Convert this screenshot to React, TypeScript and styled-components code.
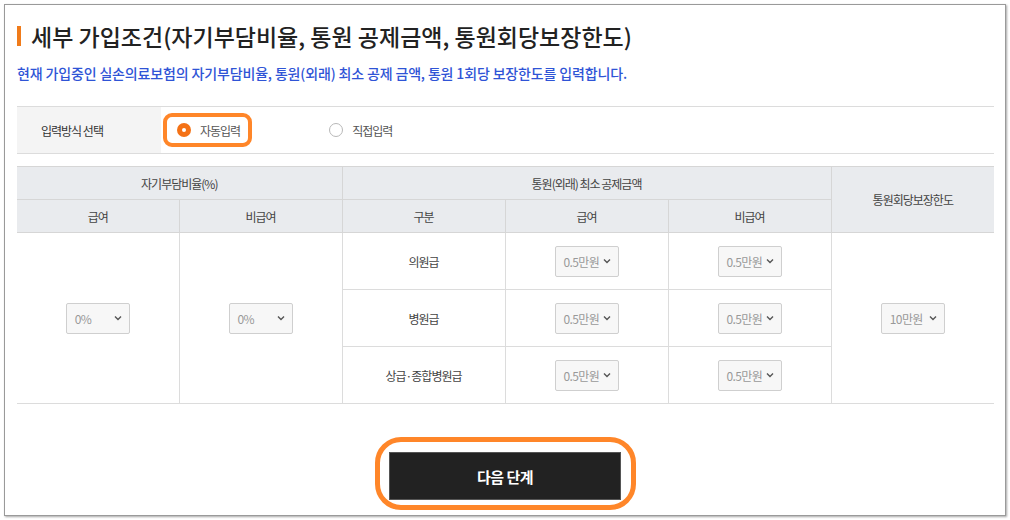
import React from "react";
import styled, { createGlobalStyle } from "styled-components";

const GlobalStyle = createGlobalStyle`
  body {
    margin: 0;
    background: #ffffff;
    font-family: "Noto Sans CJK KR", "Noto Sans", sans-serif;
    color: #333;
  }
`;

const Chevron = () => (
  <svg width="8" height="6" viewBox="0 0 8 6">
    <polyline points="1,1.5 4,4.5 7,1.5" fill="none" stroke="#555" strokeWidth="1.4" />
  </svg>
);

type SelectProps = { value: string };

const Select = ({ value }: SelectProps) => (
  <SelectBox>
    <span>{value}</span>
    <Chevron />
  </SelectBox>
);

const App = () => {
  return (
    <>
      <GlobalStyle />
      <Frame>
        <Title>
          <TitleBar />
          세부 가입조건(자기부담비율, 통원 공제금액, 통원회당보장한도)
        </Title>
        <Desc>
          현재 가입중인 실손의료보험의 자기부담비율, 통원(외래) 최소 공제 금액, 통원 1회당 보장한도를 입력합니다.
        </Desc>

        <MethodRow>
          <MethodLabel>입력방식 선택</MethodLabel>
          <MethodOptions>
            <Highlight>
              <Radio checked />
              <RadioText>자동입력</RadioText>
            </Highlight>
            <Option>
              <Radio />
              <RadioText>직접입력</RadioText>
            </Option>
          </MethodOptions>
        </MethodRow>

        <Table>
          <colgroup>
            <col style={{ width: 162 }} />
            <col style={{ width: 163 }} />
            <col style={{ width: 163 }} />
            <col style={{ width: 163 }} />
            <col style={{ width: 163 }} />
            <col style={{ width: 163 }} />
          </colgroup>
          <thead>
            <tr>
              <Th colSpan={2} $h={32}>자기부담비율(%)</Th>
              <Th colSpan={3} $h={32}>통원(외래) 최소 공제금액</Th>
              <Th rowSpan={2} $last>통원회당보장한도</Th>
            </tr>
            <tr>
              <Th $h={32}>급여</Th>
              <Th $h={32}>비급여</Th>
              <Th $h={32}>구분</Th>
              <Th $h={32}>급여</Th>
              <Th $h={32}>비급여</Th>
            </tr>
          </thead>
          <tbody>
            <tr>
              <Td rowSpan={3}>
                <Select value="0%" />
              </Td>
              <Td rowSpan={3}>
                <Select value="0%" />
              </Td>
              <Td>의원급</Td>
              <Td>
                <Select value="0.5만원" />
              </Td>
              <Td>
                <Select value="0.5만원" />
              </Td>
              <Td rowSpan={3} $last>
                <Select value="10만원" />
              </Td>
            </tr>
            <tr>
              <Td>병원급</Td>
              <Td>
                <Select value="0.5만원" />
              </Td>
              <Td>
                <Select value="0.5만원" />
              </Td>
            </tr>
            <tr>
              <Td>상급·종합병원급</Td>
              <Td>
                <Select value="0.5만원" />
              </Td>
              <Td>
                <Select value="0.5만원" />
              </Td>
            </tr>
          </tbody>
        </Table>

        <ButtonArea>
          <ButtonHighlight>
            <NextButton>다음 단계</NextButton>
          </ButtonHighlight>
        </ButtonArea>
      </Frame>
    </>
  );
};

export default App;

const Frame = styled.div`
  box-sizing: border-box;
  margin: 4px;
  width: 1002px;
  height: 512px;
  border: 1px solid #9a9a9a;
  box-shadow: 1px 1px 2px rgba(0, 0, 0, 0.35);
  padding: 0 11px 0 12px;
  overflow: hidden;
`;

const Title = styled.h1`
  display: flex;
  align-items: center;
  margin: 16px 0 0;
  height: 30px;
  font-size: 23px;
  font-weight: 500;
  letter-spacing: 0;
  color: #222;
`;

const TitleBar = styled.span`
  display: inline-block;
  width: 4px;
  height: 20px;
  margin-right: 10px;
  background: #f07b1a;
`;

const Desc = styled.p`
  margin: 12px 0 0;
  height: 20px;
  line-height: 20px;
  font-size: 14px;
  font-weight: 500;
  letter-spacing: -0.15px;
  color: #2f54d6;
`;

const MethodRow = styled.div`
  display: flex;
  margin-top: 23px;
  height: 46px;
  border-top: 1px solid #dcdcdc;
  border-bottom: 1px solid #dcdcdc;
`;

const MethodLabel = styled.div`
  display: flex;
  align-items: center;
  width: 120px;
  padding-left: 24px;
  background: #f4f4f4;
  font-size: 12px;
  letter-spacing: -1px;
  color: #333;
`;

const MethodOptions = styled.div`
  display: flex;
  align-items: center;
  gap: 77px;
  padding-left: 2px;
`;

const Option = styled.label`
  display: flex;
  align-items: center;
  gap: 9px;
`;

const Highlight = styled(Option)`
  height: 26px;
  padding: 0 8px 0 10px;
  border: 4px solid #ff8629;
  border-radius: 9px;
`;

const Radio = styled.span<{ checked?: boolean }>`
  box-sizing: border-box;
  width: 14px;
  height: 14px;
  border-radius: 50%;
  background: ${(p) => (p.checked ? "#f47216" : "#fff")};
  border: ${(p) => (p.checked ? "none" : "1px solid #b8b8b8")};
  position: relative;

  &::after {
    content: "";
    display: ${(p) => (p.checked ? "block" : "none")};
    position: absolute;
    left: 5px;
    top: 5px;
    width: 4px;
    height: 4px;
    border-radius: 50%;
    background: #fff;
  }
`;

const RadioText = styled.span`
  font-size: 12px;
  letter-spacing: -1px;
  color: #555;
`;

const Table = styled.table`
  margin-top: 12px;
  width: 977px;
  table-layout: fixed;
  border-collapse: collapse;
  font-size: 12px;
  letter-spacing: -1px;
  color: #444;
`;

const Th = styled.th<{ $h?: number; $last?: boolean }>`
  height: ${(p) => (p.$h ? `${p.$h}px` : "auto")};
  padding: 0;
  background: #e9ebee;
  font-weight: 400;
  color: #444;
  border-top: 1px solid #d6d6d6;
  border-bottom: 1px solid #d6d6d6;
  border-right: ${(p) => (p.$last ? "none" : "1px solid #d6d6d6")};
`;

const Td = styled.td<{ $last?: boolean }>`
  height: 56px;
  padding: 0;
  text-align: center;
  border-bottom: 1px solid #dcdcdc;
  border-right: ${(p) => (p.$last ? "none" : "1px solid #dcdcdc")};
`;

const SelectBox = styled.div`
  box-sizing: border-box;
  display: inline-flex;
  align-items: center;
  justify-content: space-between;
  width: 64px;
  height: 31px;
  padding: 0 7px 0 8px;
  background: #f7f7f7;
  border: 1px solid #cfcfcf;
  border-radius: 2px;
  font-size: 12px;
  letter-spacing: -0.6px;
  color: #999;
  vertical-align: middle;
`;

const ButtonArea = styled.div`
  display: flex;
  justify-content: center;
  margin-top: 33px;
`;

const ButtonHighlight = styled.div`
  padding: 10px 10px 5px 9px;
  border: 5px solid #ff8629;
  border-radius: 26px;
`;

const NextButton = styled.button`
  display: block;
  width: 232px;
  height: 48px;
  border: 1px solid #555;
  background: #222;
  color: #fff;
  font-family: inherit;
  font-size: 15px;
  font-weight: 700;
  letter-spacing: -0.5px;
  cursor: pointer;
`;
